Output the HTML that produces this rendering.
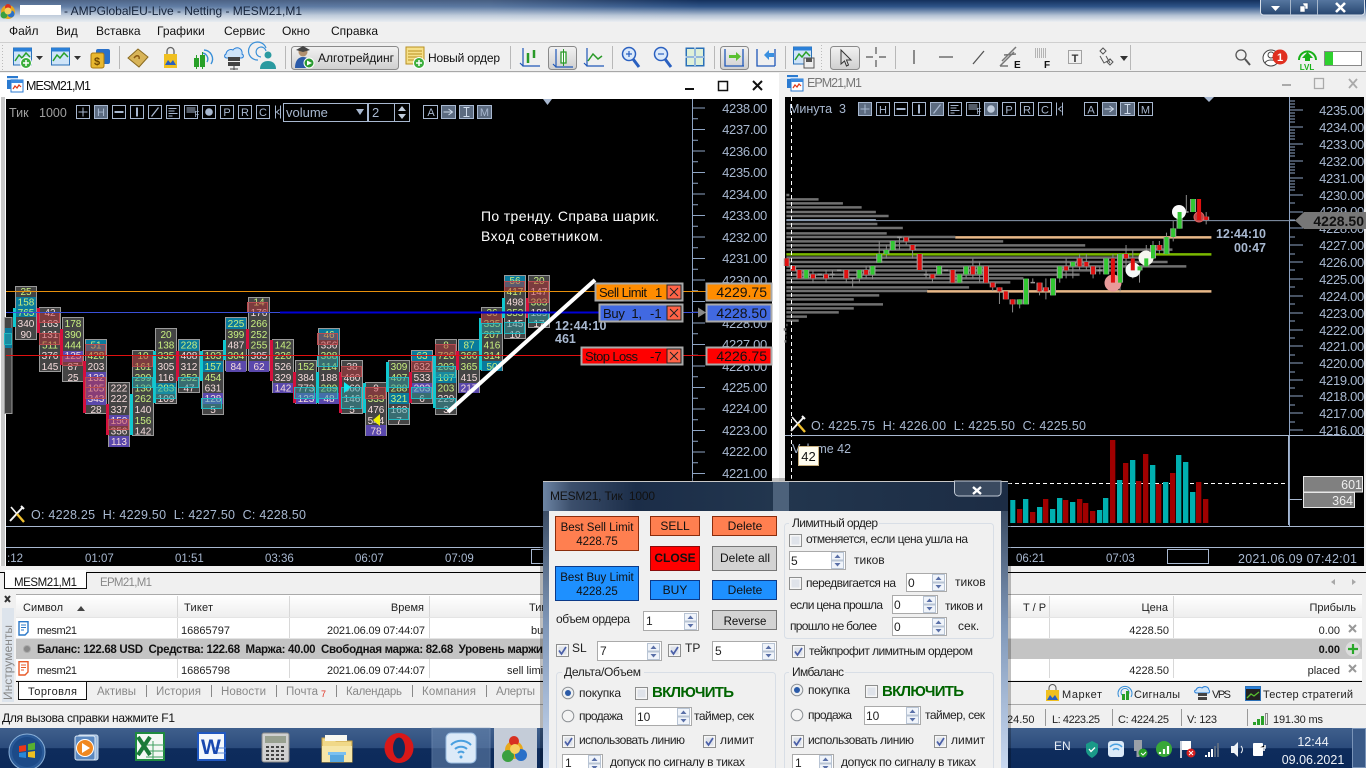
<!DOCTYPE html>
<html lang="ru"><head><meta charset="utf-8"><title>MT5</title>
<style>
html,body{margin:0;padding:0;background:#f0f0f0;overflow:hidden;width:1366px;height:768px}
svg{display:block;font-family:"Liberation Sans","DejaVu Sans",sans-serif;font-size:12px}
svg text{white-space:pre}
.ns{vector-effect:non-scaling-stroke}
.c{fill:#444;stroke:#9a9a9a;stroke-width:1}
.b{fill:#0a7a9c}.p{fill:#5a48ac}
.tb{fill:#2aa0a8;fill-opacity:.45;stroke:#20b8c0;stroke-width:1}
.rb{fill:#c03038;fill-opacity:.45;stroke:#b84c50;stroke-width:1}
.sr{fill:#d4103c}.sc{fill:#10c8d0}
.fp text{font-size:10px;text-anchor:middle}
.g{fill:#c8f080}.w{fill:#f5dcdc}
.ax{fill:#a8b8d0;font-size:13px;text-anchor:end;letter-spacing:-.3px}
.lt{fill:#a8b8d0;font-size:12.5px}
.tbt{fill:#a8b8d0;font-size:11px;text-anchor:middle}
.m{fill:#111;font-size:12px}
.e{text-anchor:end}
.mid{text-anchor:middle}
.d{fill:#222;font-size:12px}
.t{fill:#222;font-size:11px}
.on{fill:#006400;font-size:15px;font-weight:bold}
.bl{font-size:12px;fill:#111;text-anchor:middle}
.bs{font-size:11.5px;fill:#111;text-anchor:middle}
.inp{fill:#fff;stroke:#aaa}
</style></head><body>
<svg width="1366" height="768" viewBox="0 0 1366 768" xmlns="http://www.w3.org/2000/svg">
<defs>
<linearGradient id="tg" x1="0" y1="0" x2="0" y2="1"><stop offset="0" stop-color="#14305c"/><stop offset=".3" stop-color="#2f5488"/><stop offset=".7" stop-color="#b4c2d4"/><stop offset="1" stop-color="#eceff2"/></linearGradient>
<linearGradient id="tf" x1="0" y1="0" x2="1" y2="0"><stop offset="0" stop-color="#dfe6ee" stop-opacity=".3"/><stop offset=".7" stop-color="#dfe6ee" stop-opacity=".25"/><stop offset="1" stop-color="#dfe6ee" stop-opacity="0"/></linearGradient>
<linearGradient id="tk" x1="0" y1="0" x2="0" y2="1"><stop offset="0" stop-color="#3f5f8c"/><stop offset=".5" stop-color="#2c4c7c"/><stop offset=".51" stop-color="#0e2c5c"/><stop offset="1" stop-color="#0c2a5a"/></linearGradient>
<linearGradient id="hd" x1="0" y1="0" x2="0" y2="1"><stop offset="0" stop-color="#fff"/><stop offset="1" stop-color="#eee"/></linearGradient>
<linearGradient id="dt" x1="0" y1="0" x2="1" y2="0"><stop offset="0" stop-color="#6d85a4"/><stop offset=".06" stop-color="#3c4f6c"/><stop offset=".2" stop-color="#1b2d48"/><stop offset=".5" stop-color="#22364e"/><stop offset="1" stop-color="#1c2c44"/></linearGradient>
<linearGradient id="ds" x1="0" y1="0" x2="0" y2="1"><stop offset="0" stop-color="#2a3a50"/><stop offset=".5" stop-color="#7f97b8"/><stop offset="1" stop-color="#c8d8f0"/></linearGradient>
<linearGradient id="wb" x1="0" y1="0" x2="0" y2="1"><stop offset="0" stop-color="#6283ac"/><stop offset="1" stop-color="#26456f"/></linearGradient>
<linearGradient id="btn" x1="0" y1="0" x2="0" y2="1"><stop offset="0" stop-color="#f2f2f2"/><stop offset="1" stop-color="#cfcfcf"/></linearGradient>
<g id="sp"><rect x=".5" y=".5" width="12" height="7.5" fill="#f0f4fa" stroke="#b8c4d4"/><path d="M3.5 6L6.5 2.5L9.5 6z" fill="#5a70a8"/><rect x=".5" y="9" width="12" height="7.5" fill="#f0f4fa" stroke="#b8c4d4"/><path d="M3.5 11L6.5 14.5L9.5 11z" fill="#5a70a8"/></g>
<g id="cb"><rect x=".5" y=".5" width="12" height="12" fill="#f6f6f6" stroke="#8e8f8f"/><rect x="2.5" y="2.5" width="8" height="8" fill="#dfe3ea"/></g>
<g id="ck"><rect x=".5" y=".5" width="12" height="12" fill="#f6f6f6" stroke="#8e8f8f"/><rect x="2.5" y="2.5" width="8" height="8" fill="#dfe3ea"/><path d="M3 6.5L5.5 10L10 3" fill="none" stroke="#4a5fa8" stroke-width="1.7"/></g>
<g id="r1"><circle r="5.8" fill="#eef0f2" stroke="#8e9296"/><circle r="3" fill="#2a5aa8"/></g>
<g id="r0"><circle r="5.8" fill="#f4f4f4" stroke="#8e9296"/></g>
<g id="wr"><path d="M1 16L14 2" stroke="#f4f4f4" stroke-width="2"/><path d="M15 17L8 9" stroke="#f0c030" stroke-width="2.4"/><path d="M8 9L2 2" stroke="#f4f4f4" stroke-width="1.6"/><path d="M12 1l3 3" stroke="#f4f4f4" stroke-width="2"/></g>
<g id="win"><rect x="0" y="0" width="11" height="13" fill="#2a7ad0"/><rect x="0" y="2" width="11" height="2" fill="#d0e4f8"/><rect x="4" y="4" width="12" height="12" fill="#fff" stroke="#2a7ad0"/><rect x="4" y="4" width="12" height="3" fill="#3a8ae0"/><path d="M6 13l2-3 2 2 2-3 2 2" fill="none" stroke="#e03818" stroke-width="1.2"/></g>
<g id="doc"><path d="M1 .7H10V11L7 14H1z" fill="#fff" stroke="#2a78c8" stroke-width="1.4"/><path d="M3 4H8M3 6.5H8M3 9H6" stroke="#2a78c8"/></g>
<g id="doc2"><path d="M1 .7H10V11L7 14H1z" fill="#fff" stroke="#e85a28" stroke-width="1.4"/><path d="M3 4H8M3 6.5H8M3 9H6" stroke="#e85a28"/></g>
<g id="chic"><rect x=".5" y="1" width="18" height="17" fill="#cfe4f8" stroke="#2a70b8"/><rect x=".5" y="1" width="18" height="3.500" fill="#2a80d8"/><path d="M2 14l4-6 3 3 4-5 4 4" fill="none" stroke="#28a028" stroke-width="1.5"/></g>
<g id="bar"><path d="M3 0V18H20M0 15l3 3" fill="none" stroke="#2058b8" stroke-width="1.2"/></g>
</defs>

<!-- title bar -->
<rect width="1366" height="22" fill="url(#tg)"/>
<rect x="0" y="0" width="700" height="22" fill="url(#tf)"/>
<circle cx="8" cy="12" r="7" fill="#e8a81c"/><circle cx="4" cy="15" r="3.5" fill="#3aa040"/><circle cx="8" cy="7" r="3" fill="#d83020"/><circle cx="11" cy="14" r="3.5" fill="#2a70c8"/><circle cx="8" cy="11" r="3.5" fill="#f6d060"/>
<rect x="20" y="5" width="41" height="10" fill="#fff"/>
<text x="64" y="15" fill="#15233a" font-size="12" textLength="238">- AMPGlobalEU-Live - Netting - MESM21,M1</text>
<rect x="1260.5" y="-4" width="104" height="19" rx="3" fill="url(#wb)" stroke="#d8e0ea"/>
<path d="M1290.5 0V15M1317.5 0V15" stroke="#a8b8cc"/>
<path d="M1271 6h9l-4.500 5z" fill="#fff"/>
<path d="M1300 6h5v6h-5zM1303 3h5v6h-3" fill="#fff" stroke="#304a70" stroke-width=".6"/>
<path d="M1336 3L1345 12M1345 3L1336 12" stroke="#fff" stroke-width="2.600"/>

<!-- menu -->
<rect y="22" width="1366" height="50" fill="#f0f0f0"/>
<text class="m" x="9" y="35">Файл</text><text class="m" x="56" y="35">Вид</text><text class="m" x="96" y="35">Вставка</text><text class="m" x="157" y="35">Графики</text><text class="m" x="224" y="35">Сервис</text><text class="m" x="282" y="35">Окно</text><text class="m" x="331" y="35">Справка</text>
<path d="M0 42.500H1366" stroke="#cfcfcf"/>
<path d="M0 71.500H1366" stroke="#a8a8a8"/>
<path d="M2.500 45V70M821.500 45V70" stroke="#bbb" stroke-dasharray="1 2"/>
<!-- toolbar -->
<use href="#chic" x="13" y="47"/><circle cx="26" cy="63" r="5.500" fill="#3cae3c" stroke="#fff"/><path d="M23 63h6M26 60v6" stroke="#fff" stroke-width="1.500"/><path d="M36 56h7l-3.500 4z" fill="#333"/>
<use href="#chic" x="51" y="47"/><path d="M74 56h7l-3.500 4z" fill="#333"/>
<rect x="96" y="49" width="14" height="15" rx="2" fill="#2a70c8"/><rect x="91" y="53" width="13" height="15" rx="2" fill="#e8b830" stroke="#a87810"/><text x="94" y="65" font-size="11" fill="#704800" font-weight="bold">$</text>
<path d="M119.500 46V69M285.500 46V69M510.500 46V69M612.500 46V69M714.500 46V69M785.500 46V69M895.500 46V69M1130.500 45V70" stroke="#b8b8b8"/>
<path d="M128 58l10-9 10 8-9 10z" fill="#d8b458" stroke="#8a6a20"/><path d="M134 58c3-4 6-2 5 1" fill="none" stroke="#8a5810" stroke-width="1.500"/>
<path d="M164 54h13v14h-13z" fill="#f0c020"/><path d="M167 54v-3a3.500 3.500 0 0 1 7 0v3" fill="none" stroke="#666" stroke-width="1.300"/><path d="M165 65l3-5 2.500 3 2.500-3 3 5z" fill="#2a60c0"/>
<path d="M204 50a9 9 0 0 1 7 14M202 53a6 6 0 0 1 5 9" fill="none" stroke="#3a90d8" stroke-width="1.400"/><rect x="194" y="58" width="5" height="9" fill="#28a028"/><rect x="200" y="55" width="5" height="12" fill="#28a028"/><path d="M196.500 55V69M202.500 52V69" stroke="#28a028"/>
<path d="M226 54a5 5 0 0 1 7-4 5 5 0 0 1 9 4c2 1 2 4-1 4h-14c-3 0-3-3-1-4z" fill="#cfe4f8" stroke="#2a80d8"/><rect x="228" y="57" width="12" height="4" fill="#444"/><rect x="228" y="62" width="12" height="4" fill="#444"/><path d="M234 66v4M230 69h8" stroke="#444"/>
<circle cx="268" cy="55" r="3.500" fill="#2a9aa0"/><path d="M260 69c0-6 4-8 8-8s8 2 8 8z" fill="#2a9aa0"/><path d="M258 60a9 9 0 1 1 8 -12M261 57a5 5 0 1 1 5-6" fill="none" stroke="#3a90d8" stroke-width="1.200"/>
<rect x="291.500" y="46.500" width="107" height="23" rx="3" fill="url(#btn)" stroke="#8a8a8a"/>
<circle cx="303" cy="52" r="4.500" fill="#b09070"/><path d="M296 50l7-4 7 4-7 2z" fill="#444"/><path d="M295 68c0-7 3-11 8-11s6 3 6 5v6z" fill="#2a5aa8"/><circle cx="309" cy="63" r="5" fill="#2a9a30" stroke="#fff"/><path d="M307 60.500l5 2.500-5 2.500z" fill="#fff"/>
<text class="m" x="318" y="62" font-size="11" textLength="76">Алготрейдинг</text>
<rect x="406" y="47" width="18" height="17" fill="#f6e08a" stroke="#b89020"/><path d="M408 51h14M408 54h14M408 57h14M408 60h8" stroke="#b89020"/><circle cx="419" cy="63" r="5.500" fill="#3cae3c" stroke="#fff"/><path d="M416 63h6M419 60v6" stroke="#fff" stroke-width="1.500"/>
<text class="m" x="428" y="62" textLength="72">Новый ордер</text>
<use href="#bar" x="520" y="48"/><path d="M528 53v10M534 50v8" stroke="#2a9a28" stroke-width="2.500"/>
<rect x="548.500" y="46.500" width="28" height="23" rx="3" fill="url(#btn)" stroke="#8a8a8a"/><use href="#bar" x="553" y="49"/><path d="M561 52h5v11h-5z" fill="#fff" stroke="#2a9a28" stroke-width="1.300"/><path d="M563.500 49V66" stroke="#2a9a28"/>
<use href="#bar" x="584" y="48"/><path d="M588 61l5-7 5 5 4-3" fill="none" stroke="#2a9a28" stroke-width="1.500"/>
<circle cx="629" cy="54" r="6.500" fill="#dceafa" stroke="#2a60c0" stroke-width="1.500"/><path d="M626 54h6M629 51v6" stroke="#2a60c0" stroke-width="1.200"/><path d="M633 59l6 8" stroke="#2a60c0" stroke-width="3"/>
<circle cx="661" cy="54" r="6.500" fill="#dceafa" stroke="#2a60c0" stroke-width="1.500"/><path d="M658 54h6" stroke="#2a60c0" stroke-width="1.200"/><path d="M665 59l6 8" stroke="#2a60c0" stroke-width="3"/>
<rect x="685.500" y="47.500" width="19" height="19" fill="#2a70b8"/><path d="M695 47v19M685 57h19" stroke="#fff"/><rect x="687" y="49" width="7" height="7" fill="#dff0d8"/><rect x="696" y="49" width="7" height="7" fill="#dff0d8"/><rect x="687" y="58" width="7" height="7" fill="#dff0d8"/><rect x="696" y="58" width="7" height="7" fill="#dff0d8"/>
<rect x="720.500" y="46.500" width="28" height="23" rx="3" fill="url(#btn)" stroke="#8a8a8a"/><path d="M725 49V66H744M743 49V66" fill="none" stroke="#2058b8" stroke-width="1.300"/><path d="M729 55h7v-3l5 4.500-5 4.500v-3h-7z" fill="#5ac030"/>
<path d="M757 49V66H775M775 49V66" fill="none" stroke="#2058b8" stroke-width="1.300"/><path d="M774 53h-5v-3l-5 5 5 5v-3h5z" fill="#3a90e0"/>
<use href="#chic" x="793" y="46"/><rect x="804" y="58" width="10" height="10" fill="#eee" stroke="#555"/><rect x="806" y="58" width="6" height="4" fill="#555"/>
<rect x="830.500" y="46.500" width="29" height="23" rx="3" fill="url(#btn)" stroke="#8a8a8a"/><path d="M841 50l0 14 3.500-3 2 5 2-1-2-5h4.500z" fill="#ddd" stroke="#333"/>
<path d="M876 47v7M876 60v7M866 57h7M879 57h7" stroke="#555" stroke-width="1.200"/>
<path d="M914 50v14M939 57h14M973 64l11-13" stroke="#555" stroke-width="1.300"/>
<path d="M1002 61l14-14M1000 66l14-14M1004 55l12-1M1000 66l8 0" stroke="#777" stroke-width="1.500" fill="none"/><text x="1014" y="68" font-size="10" font-weight="bold" fill="#111">E</text>
<path d="M1035 49h12M1035 51h12M1035 53h12M1035 55h12M1035 57h12" stroke="#777" stroke-dasharray="1 1"/><text x="1044" y="68" font-size="10" font-weight="bold" fill="#111">F</text>
<rect x="1068.500" y="50.500" width="13" height="13" fill="none" stroke="#555" stroke-dasharray="1 1"/><text x="1075" y="62" font-size="11" fill="#333" class="mid" font-weight="bold">T</text>
<path d="M1100 51l3-3 3 3-3 3zM1106 56l4 7M1100 56l4 7 7-4M1107 62l3-3 3 3-3 3z" fill="none" stroke="#555"/>
<path d="M1120 56h8l-4 5z" fill="#333"/>
<circle cx="1241" cy="55" r="5" fill="none" stroke="#555" stroke-width="1.300"/><path d="M1245 59l5 6" stroke="#555" stroke-width="2"/>
<circle cx="1271" cy="58" r="8" fill="#fff" stroke="#444"/><circle cx="1271" cy="55" r="3" fill="none" stroke="#444"/><path d="M1265 63c2-4 10-4 12 0" fill="none" stroke="#444"/><circle cx="1280" cy="57" r="7.500" fill="#e03020"/><text x="1280" y="61" fill="#fff" font-size="11" font-weight="bold" class="mid">1</text>
<path d="M1299 60a8.500 8.500 0 1 1 17 0" fill="none" stroke="#18b018" stroke-width="2"/><path d="M1302 58l5.500-6 5.500 6h-3v3h-5v-3z" fill="#18b018"/><text x="1307" y="70" fill="#18b018" font-size="8" font-weight="bold" class="mid">LVL</text>
<rect x="1324.500" y="51.500" width="37" height="14" fill="#fff" stroke="#888"/><rect x="1325" y="52" width="8" height="13" fill="#2ed02e"/>

<!-- left window -->
<rect x="0" y="73" width="779" height="499" fill="#fff"/>
<rect x="1" y="97" width="4" height="472" fill="#c8c8c8"/>
<use href="#win" x="7" y="76"/>
<text x="26" y="90" fill="#111" font-size="12.500" textLength="65">MESM21,M1</text>
<path d="M685 89h9" stroke="#111" stroke-width="2"/><rect x="718.500" y="81.500" width="9" height="9" fill="none" stroke="#111" stroke-width="1.500"/><path d="M753 81l9 9M762 81l-9 9" stroke="#111" stroke-width="2"/>
<rect x="6" y="99" width="766" height="468" fill="#000"/>
<!-- left toolbar -->
<text x="9" y="117" fill="#a0a0a0" font-size="12.500">Тик</text>
<text x="39" y="117" fill="#a0a0a0" font-size="12.500">1000</text>
<g transform="translate(76.500,105.500)" fill="none" stroke="#a8b8d0">
<rect width="13" height="13"/><path d="M6.500 2V11M2 6.500H11"/>
<rect x="18" width="13" height="13" fill="#5c6b80"/>
<rect x="36" width="13" height="13"/><path d="M38 6.500H47" stroke-width="2"/>
<rect x="54" width="13" height="13"/><path d="M60.500 2V11" stroke-width="2"/>
<rect x="72" width="13" height="13"/><path d="M75 11L82 2" stroke-width="1.300"/>
<rect x="90" width="13" height="13"/><path d="M92 3H100M92 5.500H98M92 8H101M92 10.500H96"/>
<rect x="108" width="13" height="13"/><path d="M110 2.500H119M110 4.500H119M110 6.500H119"/>
<rect x="126" width="13" height="13"/><circle cx="132.500" cy="6.500" r="3.800" fill="#a8b8d0" stroke="none"/>
<rect x="144" width="13" height="13"/>
<rect x="162" width="13" height="13"/>
<rect x="180" width="13" height="13"/>
<path d="M199 0V13M204 0V13M203 4L200 6.500L203 9"/>
<rect x="347" width="14" height="13"/>
<rect x="365" width="14" height="13" fill="#5c6b80"/><path d="M367 6.500H375M372 3.500L376 6.500L372 9.500" stroke="#d0dcec"/>
<rect x="383" width="14" height="13" fill="#5c6b80"/><path d="M387 2H393M387 11H393M390 2V11" stroke="#d0dcec"/>
<rect x="401" width="14" height="13" fill="#5c6b80"/>
</g>
<text x="101" y="116" class="tbt">H</text><text x="227" y="116" class="tbt">P</text><text x="245" y="116" class="tbt">R</text><text x="263" y="116" class="tbt">C</text><text x="431" y="116" class="tbt">A</text><text x="484.500" y="116" class="tbt">M</text><text x="197" y="117" class="tbt" style="font-size:8px">F</text>
<rect x="283.500" y="103.500" width="84" height="18" fill="none" stroke="#a8b8d0"/><text x="286" y="117" fill="#a8b8d0" font-size="13">volume</text><path d="M356 109h8l-4 6z" fill="#a8b8d0"/>
<rect x="368.500" y="103.500" width="26" height="18" fill="none" stroke="#a8b8d0"/><text x="372" y="117" fill="#a8b8d0" font-size="13">2</text>
<rect x="394.500" y="103.500" width="15" height="18" fill="none" stroke="#a8b8d0"/><path d="M398 111l4-5 4 5zM398 114l4 5 4-5z" fill="#c0ccdc"/>
<path d="M543 99h9l-4.500 6z" fill="#a8b8d0"/>

<!-- left axis -->
<path d="M692.500 99V526" stroke="#8ea4c4" stroke-width="1"/>
<path d="M692 108h13M692 129.500h13M692 151h13M692 172.500h13M692 194h13M692 215.500h13M692 237h13M692 258.500h13M692 280h13M692 301.500h13M692 323h13M692 344.500h13M692 366h13M692 387.500h13M692 409h13M692 430.500h13M692 452h13M692 473.500h13M692 495h13M692 118.700h6M692 140.200h6M692 161.700h6M692 183.200h6M692 204.700h6M692 226.200h6M692 247.700h6M692 269.200h6M692 290.700h6M692 312.200h6M692 333.700h6M692 355.200h6M692 376.700h6M692 398.200h6M692 419.700h6M692 441.200h6M692 462.700h6" stroke="#8ea4c4"/>
<g><text class="ax" x="767" y="113">4238.00</text><text class="ax" x="767" y="134">4237.00</text><text class="ax" x="767" y="156">4236.00</text><text class="ax" x="767" y="177">4235.00</text><text class="ax" x="767" y="199">4234.00</text><text class="ax" x="767" y="220">4233.00</text><text class="ax" x="767" y="242">4232.00</text><text class="ax" x="767" y="263">4231.00</text><text class="ax" x="767" y="285">4230.00</text><text class="ax" x="767" y="328">4228.00</text><text class="ax" x="767" y="349">4227.00</text><text class="ax" x="767" y="371">4226.00</text><text class="ax" x="767" y="392">4225.00</text><text class="ax" x="767" y="413">4224.00</text><text class="ax" x="767" y="435">4223.00</text><text class="ax" x="767" y="456">4222.00</text><text class="ax" x="767" y="478">4221.00</text></g>

<!-- footprint -->
<g class="fp">
<rect class="c" x="4.500" y="317.500" width="7.500" height="96"/><rect class="b" x="5" y="328" width="7" height="20"/>
<rect class="c" x="15.500" y="286.500" width="21" height="53"/><rect class="b" x="16" y="297" width="20" height="11"/><rect class="b" x="16" y="308" width="20" height="9"/><rect class="sc" x="13" y="308" width="3" height="19"/>
<rect class="c" x="39.500" y="307.500" width="21" height="64"/><rect class="sr" x="37" y="308" width="3" height="25"/>
<rect class="c" x="62.500" y="317.500" width="21" height="64"/><rect class="p" x="63" y="351" width="20" height="11"/><rect class="sr" x="60" y="329" width="3" height="36"/>
<rect class="c" x="85.500" y="339.500" width="21" height="74"/><rect class="b" x="86" y="340" width="20" height="11"/><rect class="p" x="86" y="372" width="20" height="33"/><rect class="sr" x="83" y="361" width="3" height="52"/>
<rect class="c" x="108.500" y="382.500" width="21" height="64"/><rect class="p" x="109" y="415" width="20" height="11"/><rect class="p" x="109" y="436" width="20" height="11"/><rect class="sr" x="106" y="404" width="3" height="31"/>
<rect class="c" x="132.500" y="350.500" width="21" height="85"/><rect class="sc" x="130" y="394" width="3" height="41"/>
<rect class="c" x="155.500" y="328.500" width="21" height="75"/><rect class="b" x="156" y="383" width="20" height="11"/><rect class="sc" x="153" y="351" width="3" height="52"/>
<rect class="c" x="178.500" y="339.500" width="21" height="53"/><rect class="b" x="179" y="340" width="20" height="11"/><rect class="sr" x="176" y="351" width="3" height="30"/>
<rect class="c" x="202.500" y="350.500" width="21" height="64"/><rect class="b" x="203" y="361" width="20" height="11"/><rect class="p" x="203" y="393" width="20" height="11"/><rect class="sc" x="200" y="351" width="3" height="30"/>
<rect class="c" x="225.500" y="317.500" width="21" height="53"/><rect class="b" x="226" y="318" width="20" height="11"/><rect class="p" x="226" y="361" width="20" height="11"/><rect class="sc" x="223" y="340" width="3" height="20"/>
<rect class="c" x="248.500" y="297.500" width="21" height="73"/><rect class="p" x="249" y="361" width="20" height="11"/><rect class="sr" x="246" y="329" width="3" height="20"/>
<rect class="c" x="272.500" y="339.500" width="21" height="53"/><rect class="p" x="273" y="383" width="20" height="10"/><rect class="sr" x="270" y="340" width="3" height="41"/>
<rect class="c" x="295.500" y="360.500" width="21" height="43"/><rect class="p" x="296" y="393" width="20" height="11"/><rect class="sr" x="293" y="372" width="3" height="31"/>
<rect class="c" x="318.500" y="328.500" width="21" height="75"/><rect class="b" x="319" y="329" width="20" height="11"/><rect class="p" x="319" y="393" width="20" height="11"/><rect class="sc" x="316" y="372" width="3" height="31"/>
<rect class="c" x="341.500" y="360.500" width="21" height="53"/><rect class="sr" x="339" y="372" width="3" height="41"/>
<rect class="c" x="365.500" y="382.500" width="21" height="53"/><rect class="p" x="366" y="425" width="20" height="11"/><rect class="sc" x="363" y="383" width="3" height="30"/>
<rect class="c" x="388.500" y="360.500" width="21" height="64"/><rect class="b" x="389" y="393" width="20" height="11"/><rect class="sc" x="386" y="362" width="3" height="30"/>
<rect class="c" x="411.500" y="350.500" width="21" height="53"/><rect class="b" x="412" y="351" width="20" height="10"/><rect class="p" x="412" y="383" width="20" height="10"/><rect class="sr" x="409" y="372" width="3" height="31"/>
<rect class="c" x="435.500" y="339.500" width="21" height="75"/><rect class="b" x="436" y="372" width="20" height="11"/><rect class="sc" x="433" y="355" width="3" height="53"/>
<rect class="c" x="458.500" y="339.500" width="21" height="53"/><rect class="b" x="459" y="340" width="20" height="11"/><rect class="p" x="459" y="383" width="20" height="10"/><rect class="sr" x="456" y="351" width="3" height="19"/>
<rect class="c" x="481.500" y="307.500" width="21" height="63"/><rect class="b" x="482" y="361" width="20" height="10"/><rect class="sc" x="479" y="318" width="3" height="52"/>
<rect class="c" x="504.500" y="275.500" width="21" height="63"/><rect class="b" x="505" y="276" width="20" height="11"/><rect class="sc" x="502" y="298" width="3" height="20"/>
<rect class="c" x="528.500" y="275.500" width="21" height="52"/><rect class="sr" x="526" y="298" width="3" height="20"/>

<text x="26" y="295" class="g">25</text><text x="26" y="305.500" class="g">158</text><text x="26" y="316" class="g">765</text><text x="26" y="327" class="w">340</text><text x="26" y="338" class="w">90</text>
<text x="50" y="316" class="w">42</text><text x="50" y="327" class="w">163</text><text x="50" y="338" class="w">131</text><text x="50" y="348.500" class="g">511</text><text x="50" y="359" class="w">376</text><text x="50" y="370" class="w">145</text>
<text x="73" y="327" class="g">178</text><text x="73" y="338" class="g">390</text><text x="73" y="348.500" class="g">444</text><text x="73" y="359" class="w">125</text><text x="73" y="370" class="w">87</text><text x="73" y="381" class="w">25</text>
<text x="96" y="348.500" class="g">51</text><text x="96" y="359" class="g">428</text><text x="96" y="370" class="w">203</text><text x="96" y="381" class="w">132</text><text x="96" y="391.500" class="w">105</text><text x="96" y="402" class="w">343</text><text x="96" y="413" class="w">28</text>
<text x="119" y="391.500" class="w">222</text><text x="119" y="402" class="w">222</text><text x="119" y="413" class="w">337</text><text x="119" y="424" class="w">150</text><text x="119" y="434.500" class="w">356</text><text x="119" y="445" class="w">113</text>
<text x="143" y="359" class="g">10</text><text x="143" y="370" class="g">161</text><text x="143" y="381" class="g">299</text><text x="143" y="391.500" class="g">130</text><text x="143" y="402" class="g">262</text><text x="143" y="413" class="w">140</text><text x="143" y="424" class="g">156</text><text x="143" y="434.500" class="w">142</text>
<text x="166" y="338" class="g">20</text><text x="166" y="348.500" class="g">138</text><text x="166" y="359" class="g">335</text><text x="166" y="370" class="w">305</text><text x="166" y="381" class="w">116</text><text x="166" y="391.500" class="g">283</text><text x="166" y="402" class="w">109</text>
<text x="189" y="348.500" class="g">228</text><text x="189" y="359" class="w">408</text><text x="189" y="370" class="w">312</text><text x="189" y="381" class="g">252</text><text x="189" y="391.500" class="w">47</text>
<text x="213" y="359" class="g">103</text><text x="213" y="370" class="g">157</text><text x="213" y="381" class="g">454</text><text x="213" y="391.500" class="w">631</text><text x="213" y="402" class="w">128</text><text x="213" y="413" class="w">5</text>
<text x="236" y="327" class="g">225</text><text x="236" y="338" class="g">399</text><text x="236" y="348.500" class="w">487</text><text x="236" y="359" class="g">304</text><text x="236" y="370" class="w">84</text>
<text x="259" y="305.500" class="g">14</text><text x="259" y="316" class="w">176</text><text x="259" y="327" class="g">266</text><text x="259" y="338" class="g">252</text><text x="259" y="348.500" class="g">255</text><text x="259" y="359" class="w">305</text><text x="259" y="370" class="w">62</text>
<text x="283" y="348.500" class="g">142</text><text x="283" y="359" class="g">226</text><text x="283" y="370" class="w">526</text><text x="283" y="381" class="w">329</text><text x="283" y="391.500" class="w">142</text>
<text x="306" y="370" class="g">152</text><text x="306" y="381" class="w">384</text><text x="306" y="391.500" class="w">773</text><text x="306" y="402" class="w">123</text>
<text x="329" y="338" class="g">46</text><text x="329" y="348.500" class="w">356</text><text x="329" y="359" class="g">308</text><text x="329" y="370" class="g">114</text><text x="329" y="381" class="w">188</text><text x="329" y="391.500" class="g">289</text><text x="329" y="402" class="w">48</text>
<text x="352" y="370" class="w">38</text><text x="352" y="381" class="w">460</text><text x="352" y="391.500" class="w">360</text><text x="352" y="402" class="w">146</text><text x="352" y="413" class="w">5</text>
<text x="376" y="391.500" class="w">9</text><text x="376" y="402" class="g">333</text><text x="376" y="413" class="w">476</text><text x="376" y="424" class="w">544</text><text x="376" y="434.500" class="w">78</text>
<text x="399" y="370" class="g">309</text><text x="399" y="381" class="g">407</text><text x="399" y="391.500" class="g">288</text><text x="399" y="402" class="g">321</text><text x="399" y="413" class="w">168</text><text x="399" y="424" class="w">7</text>
<text x="422" y="359" class="g">63</text><text x="422" y="370" class="w">632</text><text x="422" y="381" class="w">533</text><text x="422" y="391.500" class="w">203</text><text x="422" y="402" class="w">6</text>
<text x="446" y="348.500" class="g">8</text><text x="446" y="359" class="g">726</text><text x="446" y="370" class="g">203</text><text x="446" y="381" class="g">107</text><text x="446" y="391.500" class="g">203</text><text x="446" y="402" class="w">229</text><text x="446" y="413" class="w">3</text>
<text x="469" y="348.500" class="g">87</text><text x="469" y="359" class="g">366</text><text x="469" y="370" class="g">365</text><text x="469" y="381" class="w">415</text><text x="469" y="391.500" class="w">217</text>
<text x="492" y="316" class="g">36</text><text x="492" y="327" class="g">335</text><text x="492" y="338" class="g">207</text><text x="492" y="348.500" class="g">416</text><text x="492" y="359" class="g">314</text><text x="492" y="370" class="g">50</text>
<text x="515" y="284" class="g">56</text><text x="515" y="295" class="g">417</text><text x="515" y="305.500" class="w">498</text><text x="515" y="316" class="g">353</text><text x="515" y="327" class="w">145</text><text x="515" y="338" class="w">10</text>
<text x="539" y="284" class="g">20</text><text x="539" y="295" class="w">147</text><text x="539" y="305.500" class="g">303</text><text x="539" y="316" class="w">189</text><text x="539" y="327" class="w">17</text>

<rect class="tb" x="4.500" y="333.500" width="7" height="11"/>
<rect class="rb" x="39.500" y="312.500" width="20" height="10"/><rect class="rb" x="39.500" y="333.500" width="20" height="11"/>
<rect class="rb" x="62.500" y="355.500" width="20" height="10"/>
<rect class="rb" x="85.500" y="344.500" width="20" height="11"/><rect class="rb" x="85.500" y="377.500" width="20" height="10"/><rect class="rb" x="85.500" y="387.500" width="20" height="11"/>
<rect class="rb" x="108.500" y="419.500" width="20" height="10"/>
<rect class="rb" x="132.500" y="355.500" width="20" height="11"/><rect class="tb" x="132.500" y="377.500" width="20" height="10"/>
<rect class="tb" x="155.500" y="387.500" width="20" height="11"/>
<rect class="tb" x="178.500" y="377.500" width="20" height="10"/>
<rect class="tb" x="201.500" y="398.500" width="20" height="10"/>
<rect class="rb" x="247.500" y="302.500" width="20" height="10"/>
<rect class="tb" x="294.500" y="387.500" width="20" height="11"/>
<rect class="rb" x="317.500" y="333.500" width="20" height="11"/><rect class="tb" x="317.500" y="355.500" width="20" height="11"/><rect class="tb" x="317.500" y="387.500" width="20" height="11"/>
<rect class="rb" x="341.500" y="366.500" width="20" height="10"/><rect class="tb" x="341.500" y="387.500" width="20" height="10"/><rect class="tb" x="341.500" y="397.500" width="20" height="11"/>
<rect class="rb" x="365.500" y="387.500" width="20" height="11"/>
<rect class="tb" x="388.500" y="377.500" width="20" height="10"/><rect class="tb" x="388.500" y="408.500" width="20" height="11"/>
<rect class="rb" x="411.500" y="361.500" width="20" height="10"/><rect class="tb" x="411.500" y="387.500" width="20" height="11"/>
<rect class="rb" x="435.500" y="344.500" width="20" height="11"/><rect class="tb" x="435.500" y="366.500" width="20" height="11"/><rect class="tb" x="435.500" y="398.500" width="20" height="10"/>
<rect class="rb" x="481.500" y="312.500" width="20" height="11"/><rect class="tb" x="481.500" y="323.500" width="20" height="10"/>
<rect class="rb" x="504.500" y="281.500" width="20" height="10"/><rect class="tb" x="504.500" y="322.500" width="20" height="11"/>
<rect class="rb" x="528.500" y="281.500" width="20" height="21"/><rect class="tb" x="528.500" y="313.500" width="20" height="9"/>
</g>
<path d="M344 382l7 5-7 6z" fill="#10e8f0"/><path d="M380 414l-7 6 7 6z" fill="#f0f000"/>
<!-- order lines -->
<path d="M6 291.500H706" stroke="#e8900c"/>
<path d="M6 312.500H706" stroke="#3a50d8"/><path d="M280 312.500H600" stroke="#0000d8" stroke-width="2"/>
<path d="M6 355.500H706" stroke="#e01010"/>
<path d="M448 412L595 280" stroke="#fff" stroke-width="4"/>
<text x="555" y="330" fill="#a8b8d0" font-size="12.500" font-weight="bold" letter-spacing=".2">12:44:10</text>
<text x="555" y="343" fill="#a8b8d0" font-size="12.500" font-weight="bold">461</text>
<text x="481" y="221" fill="#fff" font-size="14" textLength="178">По тренду. Справа шарик.</text>
<text x="481" y="241" fill="#fff" font-size="14" textLength="122">Вход советником.</text>
<path d="M706 312.500l-8-5v10z" fill="#888"/>
<g font-size="14">
<rect x="595.500" y="283.500" width="87" height="17" fill="#ff8c00" stroke="#aaa" stroke-width="2"/><text x="599" y="297" fill="#111" font-size="13" textLength="48">Sell Limit</text><text x="655" y="297" fill="#111" font-size="13">1</text><rect x="667" y="285" width="14" height="14" fill="#ff6347" stroke="#222"/><path d="M670 288l8 8M678 288l-8 8" stroke="#222"/>
<rect x="599.500" y="304.500" width="83" height="17" fill="#4169e1" stroke="#aaa" stroke-width="2"/><text x="603" y="318" fill="#111" font-size="13" textLength="39">Buy  1,</text><text x="650" y="318" fill="#111" font-size="13">-1</text><rect x="667" y="306" width="14" height="14" fill="#ff6347" stroke="#222"/><path d="M670 309l8 8M678 309l-8 8" stroke="#222"/>
<rect x="581.500" y="347.500" width="101" height="17" fill="#ff0000" stroke="#aaa" stroke-width="2"/><text x="585" y="361" fill="#111" font-size="13" textLength="53">Stop Loss</text><text x="650" y="361" fill="#111" font-size="13">-7</text><rect x="667" y="349" width="14" height="14" fill="#ff6347" stroke="#222"/><path d="M670 352l8 8M678 352l-8 8" stroke="#222"/>
<rect x="706.500" y="283.500" width="65" height="17" fill="#ff8c00" stroke="#aaa" stroke-width="2"/><text x="767" y="297" fill="#111" class="e">4229.75</text>
<rect x="706.500" y="304.500" width="65" height="17" fill="#4169e1" stroke="#aaa" stroke-width="2"/><text x="767" y="318" fill="#111" class="e">4228.50</text>
<rect x="706.500" y="347.500" width="65" height="17" fill="#ff0000" stroke="#aaa" stroke-width="2"/><text x="767" y="361" fill="#111" class="e">4226.75</text>
</g>
<use href="#wr" x="9" y="505"/>
<text class="lt" x="31" y="519" textLength="275">O: 4228.25  H: 4229.50  L: 4227.50  C: 4228.50</text>
<path d="M6 526.500H772M6 547.500H772" stroke="#a8b8d0"/>
<g fill="#a8b8d0" font-size="11.500"><text x="7" y="562">:12</text><text x="85" y="562">01:07</text><text x="175" y="562">01:51</text><text x="265" y="562">03:36</text><text x="355" y="562">06:07</text><text x="445" y="562">07:09</text></g>
<rect x="531.500" y="549.500" width="40" height="14" fill="none" stroke="#a8b8d0"/>

<!-- right window -->
<rect x="779" y="73" width="587" height="499" fill="#f0f0f0"/>
<use href="#win" x="787" y="75"/>
<text x="807" y="87" fill="#777" font-size="12.500" textLength="55">EPM21,M1</text>
<path d="M1282 85h9" stroke="#aaa" stroke-width="2"/><rect x="1314.500" y="78.500" width="9" height="10" fill="none" stroke="#aaa" stroke-width="1.300"/><path d="M1349 79l8 9M1357 79l-8 9" stroke="#aaa" stroke-width="1.800"/>
<rect x="785" y="97" width="579" height="470" fill="#000"/>
<text x="789" y="113" fill="#a8b8d0" font-size="12.500">Минута</text><text x="839" y="113" fill="#a8b8d0" font-size="12.500">3</text>
<g transform="translate(858.500,102.500)" fill="none" stroke="#a8b8d0">
<rect width="13" height="13" fill="#5c6b80"/><path d="M6.500 2V11M2 6.500H11"/>
<rect x="18" width="13" height="13"/>
<rect x="36" width="13" height="13"/><path d="M38 6.500H47" stroke-width="2"/>
<rect x="54" width="13" height="13"/><path d="M60.500 2V11" stroke-width="2"/>
<rect x="72" width="13" height="13" fill="#5c6b80"/><path d="M75 11L82 2" stroke-width="1.300"/>
<rect x="90" width="13" height="13"/><path d="M92 3H100M92 5.500H98M92 8H101M92 10.500H96"/>
<rect x="108" width="13" height="13"/><path d="M110 2.500H119M110 4.500H119M110 6.500H119"/>
<rect x="126" width="13" height="13" fill="#5c6b80"/><circle cx="132.500" cy="6.500" r="3.800" fill="#c0ccdc" stroke="none"/>
<rect x="144" width="13" height="13"/>
<rect x="162" width="13" height="13"/>
<rect x="180" width="13" height="13"/>
<path d="M198 0V13M204 0V13M203 4L200 6.500L203 9"/>
<rect x="226" width="13" height="13"/>
<rect x="244" width="14" height="13" fill="#5c6b80"/><path d="M246 6.500H254M251 3.500L255 6.500L251 9.500" stroke="#d0dcec"/>
<rect x="262" width="14" height="13" fill="#5c6b80"/><path d="M266 2H272M266 11H272M269 2V11" stroke="#d0dcec"/>
<rect x="280" width="14" height="13"/>
</g>
<text x="883" y="113.500" class="tbt">H</text><text x="1009" y="113.500" class="tbt">P</text><text x="1027" y="113.500" class="tbt">R</text><text x="1045" y="113.500" class="tbt">C</text><text x="1091" y="113.500" class="tbt">A</text><text x="1145.500" y="113.500" class="tbt">M</text><text x="979" y="114" class="tbt" style="font-size:8px">F</text>
<path d="M1204 97h10l-5 5z" fill="#a8b8d0"/>
<path d="M1289.500 97V526" stroke="#8ea4c4"/>
<path d="M1289 110h14M1289 127h14M1289 144h14M1289 161h14M1289 178h14M1289 195h14M1289 212h14M1289 228h14M1289 245h14M1289 262h14M1289 279h14M1289 296h14M1289 313h14M1289 330h14M1289 346h14M1289 363h14M1289 380h14M1289 396h14M1289 413h14M1289 430h14M1289 101h6M1289 104h6M1289 107h6M1289 113h6M1289 116h6M1289 119h6M1289 122h6M1289 130h6M1289 133h6M1289 136h6M1289 139h6M1289 147h6M1289 150h6M1289 153h6M1289 156h6M1289 164h6M1289 167h6M1289 170h6M1289 173h6M1289 181h6M1289 184h6M1289 187h6M1289 190h6M1289 203h6M1289 220h6M1289 237h6M1289 254h6M1289 270h6M1289 287h6M1289 304h6M1289 321h6M1289 338h6M1289 355h6M1289 372h6M1289 388h6M1289 405h6M1289 422h6" stroke="#8ea4c4"/>
<g><text class="ax" x="1364" y="115">4235.00</text><text class="ax" x="1364" y="132">4234.00</text><text class="ax" x="1364" y="149">4233.00</text><text class="ax" x="1364" y="166">4232.00</text><text class="ax" x="1364" y="183">4231.00</text><text class="ax" x="1364" y="200">4230.00</text><text class="ax" x="1364" y="250">4227.00</text><text class="ax" x="1364" y="267">4226.00</text><text class="ax" x="1364" y="284">4225.00</text><text class="ax" x="1364" y="301">4224.00</text><text class="ax" x="1364" y="318">4223.00</text><text class="ax" x="1364" y="335">4222.00</text><text class="ax" x="1364" y="351">4221.00</text><text class="ax" x="1364" y="368">4220.00</text><text class="ax" x="1364" y="385">4219.00</text><text class="ax" x="1364" y="401">4218.00</text><text class="ax" x="1364" y="418">4217.00</text><text class="ax" x="1364" y="435">4216.00</text><text class="ax" x="1364" y="216">4229.00</text><text class="ax" x="1364" y="233">4228.00</text></g>

<g transform="translate(780,190) scale(.3745,.3333)" fill="none">
<path class="ns" stroke="#707070" stroke-width="2.500" d="M17 15H25M17 28H103M17 40H168M17 52H218M17 66H256M17 78H290M17 102H260M17 114H328M17 130H285M17 141H468M17 154H596M17 166H815M17 179H1048M17 203H1000M17 216H1035M17 229H1085M17 241H900M17 254H800M17 265H650M17 277H615M17 292H505M17 303H395M17 316H265M17 328H197M17 343H275M17 355H197M17 367H157M17 380H72M17 392H50M17 405H20M17 418H10M17 430H14M17 442H18M17 454H12"/>
<path class="ns" stroke="#8a98a8" stroke-width="2" d="M17 90H256"/>
<path class="ns" stroke="#8a9ab0" stroke-width="1" d="M17 92H1700"/>
<path class="ns" stroke="#7ab800" stroke-width="2.500" d="M17 193H1152"/>
<path class="ns" stroke="#e8b888" stroke-width="2.500" d="M468 142H1152M393 304H1152"/>
<path class="ns" stroke="#8a8a8a" stroke-width="1" d="M88 242V278M123 240V278M140 240V265M177 240V278M194 265V292M212 240V278M230 228V265M247 228V268M265 153V218M284 165V205M319 142V180M337 142V165M354 165V205M390 240V265M407 253V278M497 229V265M515 205V265M533 215V278M568 278V303M586 292V342M621 328V367M640 328V355M675 265V278M693 278V316M710 265V328M747 229V278M764 205V265M782 216V265M800 192V240M818 192V240M836 229V265M854 229V253M889 192V292M908 190V304M924 165V241M942 180V265M960 229V278M978 165V229M996 153V205M1013 153V192M1032 128V192M1050 92V154M1067 54V116M1085 15V66M1138 66V103"/>
<path class="ns" stroke="#9a9a9a" stroke-width="1.500" d="M134 253h12M100 253h12M152 241h12M188 265h12M313 142h12M384 254h12M437 241h12M669 278h12M848 241h12M1079 66h12"/>
<path class="ns" stroke="#a0a0a0" stroke-width="6" d="M18 205V228M35 228V242M52 240V265M88 253V265M123 253V265M177 240V265M230 240V254M337 142V154M354 165V180M373 192V240M407 253V265M461 240V278M515 229V253M550 229V278M568 278V292M586 292V304M603 304V328M621 328V343M693 278V304M710 292V304M764 229V241M800 205V229M818 216V229M836 229V253M924 192V205M1013 165V180M1138 80V90M70 240V265M212 240V265M247 228V254M265 192V218M284 180V192M301 153V180M425 228V253M479 253V278M497 229V253M533 229V253M640 328V343M657 266V343M729 265V316M747 229V265M782 216V229M871 205V253M908 192V278M960 229V241M978 205V229M996 165V205M1032 141V192M1050 115V141M1067 66V116M1103 27V66"/>
</g>
<circle cx="1113" cy="283" r="8.500" fill="#e89a9a"/><circle cx="1133" cy="270" r="7.500" fill="#f4f8f8"/><circle cx="1146" cy="258" r="7.500" fill="#f6f6f0"/><circle cx="1179" cy="212" r="7" fill="#fafafa"/><circle cx="1199" cy="217" r="5" fill="#b84848" stroke="#e06060"/>
<g transform="translate(780,190) scale(.3745,.3333)" fill="none">
<path class="ns" stroke="#32c832" stroke-width="4" d="M70 240V265M212 240V265M247 228V254M265 192V218M284 180V192M301 153V180M425 228V253M479 253V278M497 229V253M533 229V253M640 328V343M657 266V343M729 265V316M747 229V265M782 216V229M871 205V253M908 192V278M960 229V241M978 205V229M996 165V205M1032 141V192M1050 115V141M1067 66V116M1103 27V66"/>
<path class="ns" stroke="#e01010" stroke-width="4" d="M18 205V228M35 228V242M52 240V265M88 253V265M123 253V265M177 240V265M230 240V254M337 142V154M354 165V180M373 192V240M407 253V265M461 240V278M515 229V253M550 229V278M568 278V292M586 292V304M603 304V328M621 328V343M693 278V304M710 292V304M764 229V241M800 205V229M818 216V229M836 229V253M889 205V278M924 192V205M942 205V241M1013 165V180M1119 27V90M1138 80V90"/>
</g>
<path d="M791.500 97V480" stroke="#fff" stroke-dasharray="4 3"/>
<path d="M1295 220.500l9-8.500h62v17h-62z" fill="#777"/><text x="1364" y="226" fill="#111" font-size="14" font-weight="bold" class="e">4228.50</text>
<text x="1266" y="238" fill="#a8b8d0" font-size="12.500" font-weight="bold" class="e">12:44:10</text><text x="1266" y="252" fill="#a8b8d0" font-size="12.500" font-weight="bold" class="e">00:47</text>
<use href="#wr" x="790" y="415"/>
<text class="lt" x="811" y="430" textLength="275">O: 4225.75  H: 4226.00  L: 4225.50  C: 4225.50</text>
<path d="M785 435.500H1364M785 526.500H1364M785 547.500H1364" stroke="#a8b8d0"/>
<text x="792" y="453" fill="#a8b8d0" font-size="12.500">Volume 42</text>
<rect x="798.500" y="446.500" width="20" height="19" fill="#fffdf0" stroke="#c8b080"/><text x="808.500" y="461" fill="#111" font-size="13" class="mid">42</text>
<path d="M791 483.500H1289" stroke="#fff" stroke-dasharray="4 3"/>
<g transform="translate(1000,430) scale(.33333)">
<g fill="#00b0b0"><rect x="30" y="210" width="16" height="69"/><rect x="69" y="207" width="16" height="72"/><rect x="111" y="231" width="16" height="48"/><rect x="150" y="237" width="16" height="42"/><rect x="171" y="204" width="16" height="75"/><rect x="210" y="216" width="16" height="63"/><rect x="291" y="240" width="16" height="39"/><rect x="309" y="204" width="16" height="75"/><rect x="351" y="150" width="16" height="129"/><rect x="390" y="90" width="16" height="189"/><rect x="450" y="105" width="16" height="174"/><rect x="489" y="156" width="16" height="123"/><rect x="528" y="75" width="16" height="204"/><rect x="549" y="96" width="16" height="183"/><rect x="570" y="186" width="16" height="93"/></g>
<g fill="#a00000"><rect x="51" y="237" width="16" height="42"/><rect x="90" y="246" width="16" height="33"/><rect x="129" y="207" width="16" height="72"/><rect x="189" y="210" width="16" height="69"/><rect x="231" y="207" width="16" height="72"/><rect x="249" y="219" width="16" height="60"/><rect x="270" y="243" width="16" height="36"/><rect x="330" y="30" width="16" height="249"/><rect x="369" y="99" width="16" height="180"/><rect x="408" y="153" width="16" height="126"/><rect x="429" y="72" width="16" height="207"/><rect x="468" y="162" width="16" height="117"/><rect x="510" y="129" width="16" height="150"/><rect x="588" y="156" width="16" height="123"/><rect x="609" y="207" width="16" height="72"/></g>
</g>
<path d="M1288.500 435V525M1288 499.500h14" stroke="#a8b8d0"/>
<rect x="1303.500" y="476.500" width="59" height="15.500" fill="#808080" stroke="#e8e8e8"/><text x="1362" y="489" fill="#eee" font-size="12.500" class="e">601</text>
<rect x="1303.500" y="492.500" width="51" height="15" fill="#808080" stroke="#e8e8e8"/><text x="1353" y="505" fill="#eee" font-size="12.500" class="e">364</text>
<g fill="#a8b8d0" font-size="11.500"><text x="1016" y="562">06:21</text><text x="1106" y="562">07:03</text></g>
<rect x="1167.500" y="549.500" width="41" height="14" fill="none" stroke="#a8b8d0"/>
<text x="1238" y="563" fill="#a8b8d0" font-size="12.500" textLength="119">2021.06.09 07:42:01</text>

<!-- chart tabs -->
<rect y="566" width="1366" height="29" fill="#f0f0f0"/>
<path d="M0 572.500H1366" stroke="#000"/>
<rect x="4.500" y="572.500" width="82" height="16" fill="#fff" stroke="#111"/><rect x="5" y="570" width="81" height="3" fill="#fff"/>
<text x="14" y="586" fill="#111" font-size="11.500" textLength="63">MESM21,M1</text>
<text x="100" y="586" fill="#888" font-size="11.500" textLength="52">EPM21,M1</text>
<path d="M1335 579v6l-4-3zM1352 579v6l4-3z" fill="#a8a8a8"/>

<!-- terminal -->
<rect x="0" y="592" width="1366" height="113" fill="#f0f0f0"/>
<path d="M5 596l5 6M10 596l-5 6" stroke="#333" stroke-width="2"/>
<rect x="2" y="608" width="12" height="94" fill="#dde4ec"/>
<text transform="translate(12,700) rotate(-90)" fill="#888" font-size="12" textLength="75">Инструменты</text>
<rect x="16" y="594.500" width="1346" height="87" fill="#fff"/>
<path d="M16 594.500H1362" stroke="#aaa"/>
<rect x="16" y="596" width="1346" height="21" fill="url(#hd)"/>
<path d="M177.500 596V678M289.500 596V678M429.500 596V678M1049.500 596V678M1173.500 596V678" stroke="#d8d8d8"/>
<path d="M16 617.500H1362M16 638.500H1362" stroke="#e4e4e4"/>
<text class="t" x="23" y="611" textLength="40">Символ</text><path d="M77 611h8l-4-5z" fill="#444"/>
<text class="t" x="184" y="611" textLength="29">Тикет</text><text class="t e" x="424" y="611">Время</text><text class="t" x="529" y="611">Тип</text>
<text class="t" x="1023" y="611">T / P</text><text class="t e" x="1168" y="611">Цена</text><text class="t e" x="1356" y="611">Прибыль</text>
<use href="#doc" x="18" y="621"/><text class="t" x="37" y="634" textLength="40">mesm21</text><text class="t" x="181" y="634">16865797</text><text class="t" x="327" y="634" textLength="98">2021.06.09 07:44:07</text><text class="t" x="531" y="634">buy</text>
<text class="t e" x="1169" y="634">4228.50</text><text class="t e" x="1340" y="634">0.00</text><path d="M1349 625l7 7M1356 625l-7 7" stroke="#999" stroke-width="2"/>
<rect x="16" y="639" width="1346" height="20" fill="#c4c4c4"/><circle cx="27" cy="649" r="3.500" fill="#888" stroke="#aaa"/>
<text x="37" y="653" fill="#111" font-size="11.500" font-weight="bold" textLength="506">Баланс: 122.68 USD  Средства: 122.68  Маржа: 40.00  Свободная маржа: 82.68  Уровень маржи</text>
<text x="1340" y="653" fill="#111" font-size="11" font-weight="bold" class="e">0.00</text><circle cx="1353" cy="649" r="7.500" fill="#dcdcdc"/><path d="M1348 649h10M1353 644v10" stroke="#2aa82a" stroke-width="2.200"/>
<use href="#doc2" x="18" y="661"/><text class="t" x="37" y="674" textLength="40">mesm21</text><text class="t" x="181" y="674">16865798</text><text class="t" x="327" y="674" textLength="98">2021.06.09 07:44:07</text><text class="t" x="507" y="674">sell limit</text>
<text class="t e" x="1169" y="674">4228.50</text><text class="t e" x="1340" y="674">placed</text><path d="M1349 665l7 7M1356 665l-7 7" stroke="#999" stroke-width="2"/>
<rect x="16" y="680" width="1346" height="23" fill="#f0f0f0"/>
<path d="M16 681.500H1362" stroke="#000"/>
<rect x="18.500" y="681.500" width="68" height="18" fill="#fff" stroke="#111"/>
<text class="t" x="28" y="695" textLength="49">Торговля</text>
<g fill="#888" font-size="11.500"><text x="97" y="695" textLength="39">Активы</text><text x="156" y="695" textLength="45">История</text><text x="221" y="695" textLength="45">Новости</text><text x="286" y="695" textLength="32">Почта</text><text x="321" y="697" fill="#e03020" font-size="9">7</text><text x="346" y="695" textLength="56">Календарь</text><text x="422" y="695" textLength="54">Компания</text><text x="496" y="695" textLength="39">Алерты</text></g>
<path d="M146.500 685V697M211.500 685V697M276.500 685V697M336.500 685V697M412.500 685V697M486.500 685V697" stroke="#888"/>
<path d="M1046 690h13v11h-13z" fill="#f0c020"/><path d="M1049 690v-2a3.500 3.500 0 0 1 7 0v2" fill="none" stroke="#555"/><path d="M1047 700l3-5 2.500 3 2.500-3 3 5z" fill="#2a60c0"/>
<text class="t" x="1062" y="698" textLength="40">Маркет</text>
<path d="M1119 697a7 7 0 1 1 12 0M1122 695a4 4 0 1 1 6 0" fill="none" stroke="#3a90d8"/><rect x="1122" y="694" width="3" height="6" fill="#28a028"/><rect x="1126" y="691" width="3" height="9" fill="#28a028"/>
<text class="t" x="1134" y="698" textLength="46">Сигналы</text>
<path d="M1196 690a4 4 0 0 1 6-2 4 4 0 0 1 7 2c1 1 1 3-1 3h-11c-3 0-3-3-1-3z" fill="#cfe4f8" stroke="#2a80d8"/><rect x="1198" y="693" width="9" height="3" fill="#444"/><rect x="1198" y="697" width="9" height="3" fill="#444"/>
<text class="t" x="1212" y="698" textLength="19">VPS</text>
<rect x="1245.500" y="686.500" width="15" height="14" fill="#222" stroke="#2a70b8"/><rect x="1246" y="687" width="14" height="2" fill="#2a80d8"/><path d="M1247 698l4-4 3 2 5-4" fill="none" stroke="#58c030" stroke-width="1.300"/>
<text class="t" x="1263" y="698" textLength="90">Тестер стратегий</text>

<!-- status -->
<rect y="705" width="1366" height="23" fill="#f0f0f0"/><path d="M0 704.500H1366" stroke="#aaa"/>
<text class="d" x="2" y="722" style="fill:#111" textLength="173">Для вызова справки нажмите F1</text>
<text class="t" x="1007" y="723">24.50</text><text class="t" x="1052" y="723" textLength="48">L: 4223.25</text><text class="t" x="1118" y="723" textLength="51">C: 4224.25</text><text class="t" x="1187" y="723" textLength="30">V: 123</text><text class="t" x="1273" y="723" textLength="50">191.30 ms</text>
<path d="M1045.500 709V726M1112.500 709V726M1181.500 709V726M1247.500 709V726" stroke="#999"/>
<path d="M1253 722h3v3h-3zM1257 719h3v6h-3zM1261 716h3v9h-3z" fill="#2aa02a"/><rect x="1265.500" y="713.500" width="2" height="11" fill="none" stroke="#888"/>

<!-- taskbar -->
<rect y="728" width="1366" height="40" fill="url(#tk)"/>
<circle cx="27" cy="752" r="18" fill="#2a5a98" stroke="#8ab0d8"/><circle cx="27" cy="752" r="15" fill="#1c4a88"/>
<path d="M19 746l7-1v6l-7 1z" fill="#e83818"/><path d="M28 744l7-1.500v7l-7 1z" fill="#58b030"/><path d="M19 753l7-1v6l-7-1z" fill="#2a88d8"/><path d="M28 752l7-1v7l-7-1z" fill="#f0c020"/>
<rect x="78" y="735" width="20" height="25" rx="2" fill="#9ab8dc" stroke="#cfe0f0"/><rect x="75" y="736" width="20" height="24" rx="2" fill="#5a88c0" stroke="#dce8f4"/><circle cx="85" cy="748" r="8.500" fill="#f08820" stroke="#fff"/><path d="M82 743l8 5-8 5z" fill="#fff"/>
<rect x="136" y="733" width="28" height="27" fill="#f4f8f4" stroke="#1f8a40" stroke-width="2"/><path d="M146 745h18M146 751h18M146 757h18M153 741v18" stroke="#40a060"/><path d="M138 737l12 18M150 737l-12 18" stroke="#1a7a38" stroke-width="4"/>
<rect x="198" y="733" width="27" height="27" fill="#f4f8fc" stroke="#2058c0" stroke-width="2"/><path d="M214 748h12M214 753h12" stroke="#5a88d8"/><text x="201" y="754" fill="#1848b0" font-size="21" font-weight="bold">W</text>
<rect x="262" y="733" width="27" height="29" rx="2" fill="#d0d0d0" stroke="#888"/><rect x="265" y="736" width="21" height="7" fill="#98a090"/><path d="M266 747h19M266 751h19M266 755h19M266 759h19" stroke="#444" stroke-width="2" stroke-dasharray="3 2"/>
<path d="M322 738h12l2 3h16v21h-30z" fill="#f0d888" stroke="#c8a040"/><rect x="325" y="735" width="22" height="6" fill="#f8f8f0"/><path d="M322 746h30v16h-30z" fill="#f6e6a8"/><path d="M330 762v-7h14v7" fill="#58a8e0"/><rect x="328" y="752" width="18" height="3" fill="#7ac0f0"/>
<ellipse cx="399" cy="748" rx="14.500" ry="15" fill="#d81818"/><ellipse cx="399" cy="748" rx="6" ry="10.500" fill="#0e2c5c"/>
<rect x="432" y="728" width="58" height="40" fill="#6a88b0" opacity=".55" stroke="#8aa4c8"/>
<rect x="446" y="733" width="30" height="30" rx="5" fill="#dceaf8" stroke="#9abce0"/><path d="M451 745a14 14 0 0 1 20 0M455 749a9 9 0 0 1 12 0M458 753a4 4 0 0 1 6 0" fill="none" stroke="#4aa0e0" stroke-width="2"/><circle cx="461" cy="757" r="1.500" fill="#4aa0e0"/>
<rect x="494" y="728" width="43" height="40" fill="#c4ccd8"/>
<circle cx="514" cy="750" r="9" fill="#e8a81c"/><circle cx="508" cy="756" r="6" fill="#3aa040"/><circle cx="514" cy="741" r="5" fill="#d83020"/><circle cx="521" cy="755" r="6" fill="#2a70c8"/><circle cx="515" cy="749" r="5" fill="#f6d060"/>
<text x="1054" y="750" fill="#e8eef6" font-size="12">EN</text>
<path d="M1086 744l6-3 6 3v6c0 4-3 6-6 8-3-2-6-4-6-8z" fill="#1a9a88"/><path d="M1089 749l2 2.500 4-4" fill="none" stroke="#fff" stroke-width="1.300"/>
<rect x="1108" y="741" width="16" height="16" rx="3" fill="#dceaf8"/><path d="M1110 747a8 8 0 0 1 12 0M1113 750a4 4 0 0 1 6 0" fill="none" stroke="#4aa0e0" stroke-width="1.500"/>
<rect x="1134" y="740" width="8" height="11" fill="#9aa0a8"/><path d="M1138 751v6" stroke="#9aa0a8" stroke-width="3"/><circle cx="1143" cy="753" r="4.500" fill="#28a028"/><path d="M1141 753l2 2 3-3" fill="none" stroke="#fff"/>
<circle cx="1164" cy="749" r="8" fill="#38a838"/><path d="M1160 754v-2M1164 754v-5M1168 754v-8" stroke="#fff" stroke-width="2.200"/>
<path d="M1181 741v17" stroke="#fff" stroke-width="1.500"/><path d="M1182 741h9v9h-9z" fill="#fff"/><circle cx="1191" cy="753" r="4.500" fill="#d82020"/><path d="M1189 751l4 4M1193 751l-4 4" stroke="#fff"/>
<path d="M1205 755h2v2h-2zM1208 752h2v5h-2zM1211 749h2v8h-2z" fill="#fff"/><path d="M1214 746h2v11h-2zM1217 743h2v14h-2z" fill="#5a6a80"/>
<path d="M1231 746h3l4-4v15l-4-4h-3z" fill="#eef2f6"/><path d="M1241 746a5 5 0 0 1 0 7" fill="none" stroke="#eef2f6"/>
<rect x="1253" y="743" width="10" height="13" rx="1" fill="#fff"/><path d="M1259 748h6v-3M1259 750h6" stroke="#fff" stroke-width="1.500"/>
<text x="1313" y="746" fill="#eef2f8" font-size="12.500" class="mid">12:44</text><text x="1313" y="764" fill="#eef2f8" font-size="12.500" class="mid">09.06.2021</text>
<rect x="1352.500" y="728.500" width="13" height="39" fill="#3a5a88" stroke="#7a94b8"/>

<!-- dialog -->
<rect x="540" y="478" width="471" height="290" fill="#000" opacity=".25"/>
<rect x="543" y="481" width="465" height="287" fill="url(#ds)"/>
<rect x="543" y="481" width="465" height="30" fill="url(#dt)"/>
<rect x="773" y="481" width="16" height="30" fill="#8fa4c0" opacity=".4"/>
<path d="M543 481.500H1008" stroke="#c8c8c8"/>
<text x="550" y="500" fill="#111" font-size="12" textLength="105">MESM21, Тик  1000</text>
<path d="M954.500 481V492a4 4 0 0 0 4 4H998a4 4 0 0 0 3-4V481z" fill="#3a4a60" stroke="#c0c8d4"/><path d="M973 487l8 7M981 487l-8 7" stroke="#fff" stroke-width="2.400"/>
<rect x="549" y="511" width="452" height="257" fill="#f0f0f0"/>

<rect x="555.500" y="516.500" width="83" height="34" fill="#ff7f50" stroke="#8a2c0c"/><text x="597" y="531" class="bs">Best Sell Limit</text><text x="597" y="545" class="bs">4228.75</text>
<rect x="555.500" y="566.500" width="83" height="34" fill="#1e90ff" stroke="#0c3a88"/><text x="597" y="581" class="bs">Best Buy Limit</text><text x="597" y="595" class="bs">4228.25</text>
<rect x="650.500" y="516.500" width="49" height="19" fill="#ff7f50" stroke="#8a2c0c"/><text x="675" y="530" class="bl">SELL</text>
<rect x="712.500" y="516.500" width="64" height="19" fill="#ff7f50" stroke="#8a2c0c"/><text x="745" y="530" class="bl">Delete</text>
<rect x="650.500" y="546.500" width="49" height="24" fill="#ff0000" stroke="#8a0c0c"/><text x="675" y="562" class="bl" font-weight="bold">CLOSE</text>
<rect x="712.500" y="546.500" width="64" height="24" fill="#d3d3d3" stroke="#777"/><text x="745" y="562" class="bl">Delete all</text>
<rect x="650.500" y="580.500" width="49" height="19" fill="#1e90ff" stroke="#0c3a88"/><text x="675" y="594" class="bl">BUY</text>
<rect x="712.500" y="580.500" width="64" height="19" fill="#1e90ff" stroke="#0c3a88"/><text x="745" y="594" class="bl">Delete</text>
<text class="d" x="556" y="623" textLength="74">объем ордера</text>
<rect class="inp" x="643.500" y="611.500" width="55" height="19"/><text class="d" x="646" y="625">1</text><use href="#sp" x="684" y="613"/>
<rect x="712.500" y="610.500" width="64" height="19" fill="#d3d3d3" stroke="#777"/><text x="745" y="625" class="bs">Reverse</text>
<use href="#ck" x="556" y="644"/><text class="d" x="572" y="652">SL</text>
<rect class="inp" x="597.500" y="641.500" width="64" height="19"/><text class="d" x="600" y="655">7</text><use href="#sp" x="647" y="643"/>
<use href="#ck" x="668" y="644"/><text class="d" x="685" y="652">TP</text>
<rect class="inp" x="712.500" y="641.500" width="64" height="19"/><text class="d" x="715" y="655">5</text><use href="#sp" x="762" y="643"/>

<rect x="556.500" y="672.500" width="219" height="100" rx="3" fill="none" stroke="#d8dee6"/><rect x="562" y="668" width="82" height="10" fill="#f0f0f0"/>
<text class="d" x="564" y="676" textLength="77">Дельта/Объем</text>
<use href="#r1" x="568" y="693"/><text class="d" x="579" y="697" textLength="42">покупка</text><use href="#cb" x="635" y="687"/><text class="on" x="652" y="697" textLength="82">ВКЛЮЧИТЬ</text>
<use href="#r0" x="568" y="716"/><text class="d" x="579" y="720" textLength="44">продажа</text>
<rect class="inp" x="635.500" y="707.500" width="56" height="18"/><text class="d" x="637" y="721">10</text><use href="#sp" x="677" y="708"/><text class="d" x="694" y="720" textLength="60">таймер, сек</text>
<use href="#ck" x="562" y="735"/><text class="d" x="579" y="744" textLength="106">использовать линию</text><use href="#ck" x="703" y="735"/><text class="d" x="720" y="744">лимит</text>
<rect class="inp" x="562.500" y="754.500" width="40" height="20"/><text class="d" x="565" y="767">1</text><use href="#sp" x="588" y="755"/><text class="d" x="610" y="766" textLength="135">допуск по сигналу в тиках</text>

<rect x="784.500" y="523.500" width="209" height="115" rx="3" fill="none" stroke="#d8dee6"/><rect x="789" y="519" width="90" height="9" fill="#f0f0f0"/>
<text class="d" x="792" y="527" textLength="86">Лимитный ордер</text>
<use href="#cb" x="789" y="534"/><text class="d" x="806" y="543" textLength="162">отменяется, если цена ушла на</text>
<rect class="inp" x="789.500" y="551.500" width="56" height="18"/><text class="d" x="791" y="565">5</text><use href="#sp" x="831" y="552"/><text class="d" x="854" y="564">тиков</text>
<use href="#cb" x="789" y="577"/><text class="d" x="806" y="587" textLength="90">передвигается на</text>
<rect class="inp" x="906.500" y="573.500" width="40" height="18"/><text class="d" x="908" y="587">0</text><use href="#sp" x="932" y="574"/><text class="d" x="955" y="586">тиков</text>
<text class="d" x="790" y="609" textLength="93">если цена прошла</text>
<rect class="inp" x="892.500" y="595.500" width="45" height="18"/><text class="d" x="894" y="609">0</text><use href="#sp" x="923" y="596"/><text class="d" x="945" y="610" textLength="38">тиков и</text>
<text class="d" x="790" y="630" textLength="87">прошло не более</text>
<rect class="inp" x="892.500" y="617.500" width="54" height="18"/><text class="d" x="894" y="631">0</text><use href="#sp" x="932" y="618"/><text class="d" x="958" y="630">сек.</text>
<use href="#ck" x="792" y="645"/><text class="d" x="809" y="655" textLength="164">тейкпрофит лимитным ордером</text>

<rect x="784.500" y="672.500" width="209" height="100" rx="3" fill="none" stroke="#d8dee6"/><rect x="789" y="668" width="56" height="10" fill="#f0f0f0"/>
<text class="d" x="792" y="676" textLength="52">Имбаланс</text>
<use href="#r1" x="797" y="690"/><text class="d" x="808" y="694" textLength="42">покупка</text><use href="#cb" x="865" y="685"/><text class="on" x="882" y="696" textLength="82">ВКЛЮЧИТЬ</text>
<use href="#r0" x="797" y="715"/><text class="d" x="808" y="719" textLength="44">продажа</text>
<rect class="inp" x="864.500" y="706.500" width="56" height="18"/><text class="d" x="866" y="720">10</text><use href="#sp" x="906" y="707"/><text class="d" x="925" y="719" textLength="60">таймер, сек</text>
<use href="#ck" x="791" y="735"/><text class="d" x="808" y="744" textLength="106">использовать линию</text><use href="#ck" x="934" y="735"/><text class="d" x="951" y="744">лимит</text>
<rect class="inp" x="792.500" y="754.500" width="41" height="20"/><text class="d" x="795" y="767">1</text><use href="#sp" x="819" y="755"/><text class="d" x="841" y="766" textLength="135">допуск по сигналу в тиках</text>
</svg>
</body></html>
